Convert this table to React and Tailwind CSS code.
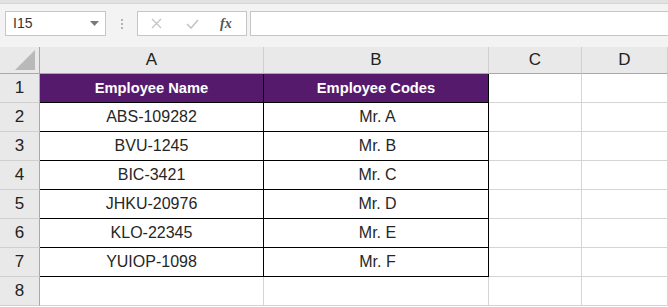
import React from "react";

const linhas = [
  ["ABS-109282", "Mr. A"],
  ["BVU-1245", "Mr. B"],
  ["BIC-3421", "Mr. C"],
  ["JHKU-20976", "Mr. D"],
  ["KLO-22345", "Mr. E"],
  ["YUIOP-1098", "Mr. F"],
];

export default function App() {
  return (
    <div className="w-[668px] h-[307px] overflow-hidden bg-white text-[#222] font-['Liberation_Sans',Arial,sans-serif]">
      {/* barra de fórmulas */}
      <div className="h-[47px] bg-[#f3f3f3] flex flex-col">
        <div className="h-[4px] bg-[#e2e2e2] border-b border-[#d6d6d6]"></div>
        <div className="flex items-center h-[25px] mt-[7px]">
          <div className="ml-[5px] w-[101px] h-[25px] bg-white border border-[#c6c6c6] flex items-center justify-between pl-[7px] pr-[6px]">
            <span className="text-[14px] text-[#333]">I15</span>
            <svg width="9" height="5" viewBox="0 0 9 5"><path d="M0 0h9L4.5 5z" fill="#7a7a7a" /></svg>
          </div>
          <div className="w-[31px] flex justify-center">
            <div className="flex flex-col gap-[2px]">
              <span className="w-[2px] h-[2px] bg-[#b4b4b4]"></span>
              <span className="w-[2px] h-[2px] bg-[#b4b4b4]"></span>
              <span className="w-[2px] h-[2px] bg-[#b4b4b4]"></span>
            </div>
          </div>
          <div className="w-[110px] h-[25px] bg-white border border-[#c6c6c6] flex items-center">
            <svg className="ml-[13px]" width="11" height="11" viewBox="0 0 11 11">
              <path d="M1 1l9 9M10 1l-9 9" stroke="#c4c4c4" strokeWidth="1.3" />
            </svg>
            <svg className="ml-[24px]" width="13" height="10" viewBox="0 0 13 10">
              <path d="M1 5l4 4 7-8" stroke="#c4c4c4" strokeWidth="1.6" fill="none" />
            </svg>
            <span className="ml-[21px] italic font-bold text-[14px] text-[#555] font-['Liberation_Serif',serif]">fx</span>
          </div>
          <div className="ml-[3px] flex-1 h-[25px] bg-white border-y border-l border-[#c6c6c6]"></div>
        </div>
      </div>

      {/* grade */}
      <div className="grid grid-cols-[40px_224px_225px_93px_86px] grid-rows-[27px_repeat(8,29px)]">
        <div className="bg-[#e9e9e9] border-r border-b border-[#a8a8a8] relative">
          <svg className="absolute right-[4px] bottom-[3px]" width="20" height="20" viewBox="0 0 20 20">
            <path d="M20 0V20H0z" fill="#b9b9b9" />
          </svg>
        </div>
        {["A", "B", "C", "D"].map((c) => (
          <div key={c} className="bg-[#e9e9e9] border-r border-b border-r-[#cfcfcf] border-b-[#a8a8a8] flex items-center justify-center text-[17px] text-[#222]">
            {c}
          </div>
        ))}

        {/* linha 1 cabeçalho */}
        <Num n={1} />
        <div className="bg-[#561a6d] border-r border-b border-black flex items-center justify-center text-white font-bold text-[14.7px]">
          Employee Name
        </div>
        <div className="bg-[#561a6d] border-r border-b border-black flex items-center justify-center text-white font-bold text-[14.7px]">
          Employee Codes
        </div>
        <Vazia />
        <Vazia />

        {linhas.map((l, i) => (
          <React.Fragment key={i}>
            <Num n={i + 2} />
            <div className="border-r border-b border-black flex items-center justify-center text-[16px] text-[#262626]">{l[0]}</div>
            <div className="border-r border-b border-black flex items-center justify-center text-[16px] text-[#262626] pl-[3px]">{l[1]}</div>
            <Vazia />
            <Vazia />
          </React.Fragment>
        ))}

        <Num n={8} />
        <Vazia />
        <Vazia />
        <Vazia />
        <Vazia />
      </div>
    </div>
  );
}

function Num({ n }) {
  return (
    <div className="bg-[#e9e9e9] border-r border-b border-r-[#a8a8a8] border-b-[#cfcfcf] flex items-center justify-center text-[17px] text-[#222]">
      {n}
    </div>
  );
}

function Vazia() {
  return <div className="border-r border-b border-[#d4d4d4]"></div>;
}
